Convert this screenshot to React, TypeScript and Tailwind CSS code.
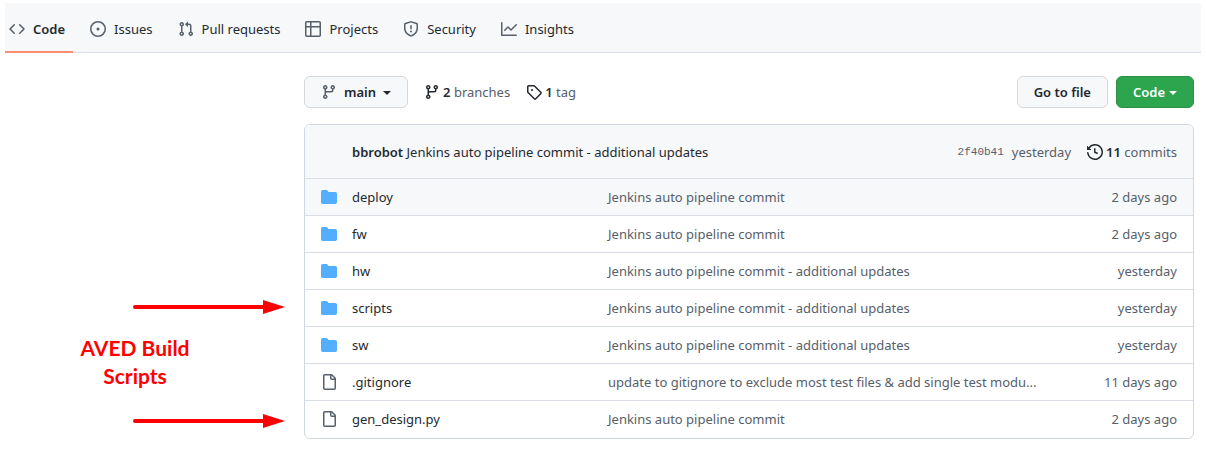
import React from "react";

const paths = {
  code: "M4.72 3.22a.75.75 0 011.06 1.06L2.06 8l3.72 3.72a.75.75 0 11-1.06 1.06L.47 8.53a.75.75 0 010-1.06l4.25-4.25zm6.56 0a.75.75 0 10-1.06 1.06L13.94 8l-3.72 3.72a.75.75 0 101.06 1.06l4.25-4.25a.75.75 0 000-1.06l-4.25-4.25z",
  issue:
    "M8 9.5a1.5 1.5 0 100-3 1.5 1.5 0 000 3zM8 0a8 8 0 100 16A8 8 0 008 0zM1.5 8a6.5 6.5 0 1113 0 6.5 6.5 0 01-13 0z",
  pull: "M7.177 3.073L9.573.677A.25.25 0 0110 .854v4.792a.25.25 0 01-.427.177L7.177 3.427a.25.25 0 010-.354zM3.75 2.5a.75.75 0 100 1.5.75.75 0 000-1.5zm-2.25.75a2.25 2.25 0 113 2.122v5.256a2.251 2.251 0 11-1.5 0V5.372A2.25 2.25 0 011.5 3.25zM11 2.5h-1V4h1a1 1 0 011 1v5.628a2.251 2.251 0 101.5 0V5A2.5 2.5 0 0011 2.5zm1 10.25a.75.75 0 111.5 0 .75.75 0 01-1.5 0zM3.75 12a.75.75 0 100 1.5.75.75 0 000-1.5z",
  table:
    "M0 1.75C0 .784.784 0 1.75 0h12.5C15.216 0 16 .784 16 1.75v12.5A1.75 1.75 0 0114.25 16H1.75A1.75 1.75 0 010 14.25V1.75zM1.5 6.5v7.75c0 .138.112.25.25.25H5v-8H1.5zM5 5H1.5V1.75a.25.25 0 01.25-.25H5V5zm1.5 1.5v8h7.75a.25.25 0 00.25-.25V6.5h-8zm8-1.5h-8V1.5h7.75a.25.25 0 01.25.25V5z",
  shield:
    "M7.467.133a1.75 1.75 0 011.066 0l5.25 1.68A1.75 1.75 0 0115 3.48V7c0 1.566-.32 3.182-1.303 4.682-.983 1.498-2.585 2.813-5.032 3.855a1.7 1.7 0 01-1.33 0c-2.447-1.042-4.049-2.357-5.032-3.855C1.32 10.182 1 8.566 1 7V3.48a1.75 1.75 0 011.217-1.667l5.25-1.68zm.61 1.429a.25.25 0 00-.153 0l-5.25 1.68a.25.25 0 00-.174.238V7c0 1.358.275 2.666 1.057 3.86.784 1.194 2.121 2.34 4.366 3.297a.2.2 0 00.154 0c2.245-.956 3.582-2.104 4.366-3.298C13.225 9.666 13.5 8.36 13.5 7V3.48a.25.25 0 00-.174-.237l-5.25-1.68zM9 10.5a1 1 0 11-2 0 1 1 0 012 0zm-.25-5.75a.75.75 0 10-1.5 0v3a.75.75 0 001.5 0v-3z",
  graph:
    "M1.5 1.75a.75.75 0 00-1.5 0v12.5c0 .414.336.75.75.75h14.5a.75.75 0 000-1.5H1.5V1.75zm14.28 2.53a.75.75 0 00-1.06-1.06L10 7.94 7.53 5.47a.75.75 0 00-1.06 0L3.22 8.72a.75.75 0 001.06 1.06L7 7.06l2.47 2.47a.75.75 0 001.06 0l5.25-5.25z",
  branch:
    "M11.75 2.5a.75.75 0 100 1.5.75.75 0 000-1.5zm-2.25.75a2.25 2.25 0 113 2.122V6A2.5 2.5 0 0110 8.5H6a1 1 0 00-1 1v1.128a2.251 2.251 0 11-1.5 0V5.372a2.25 2.25 0 111.5 0v1.836A2.492 2.492 0 016 7h4a1 1 0 001-1v-.628A2.25 2.25 0 019.5 3.25zM4.25 12a.75.75 0 100 1.5.75.75 0 000-1.5zM3.5 3.25a.75.75 0 111.5 0 .75.75 0 01-1.5 0z",
  tag: "M2.5 7.775V2.75a.25.25 0 01.25-.25h5.025a.25.25 0 01.177.073l6.25 6.25a.25.25 0 010 .354l-5.025 5.025a.25.25 0 01-.354 0l-6.25-6.25a.25.25 0 01-.073-.177zm-1.5 0V2.75C1 1.784 1.784 1 2.75 1h5.025c.464 0 .91.184 1.238.513l6.25 6.25a1.75 1.75 0 010 2.474l-5.026 5.026a1.75 1.75 0 01-2.474 0l-6.25-6.25A1.75 1.75 0 011 7.775zM6 5a1 1 0 100 2 1 1 0 000-2z",
  history:
    "M1.643 3.143L.427 1.927A.25.25 0 000 2.104V5.75c0 .138.112.25.25.25h3.646a.25.25 0 00.177-.427L2.715 4.215a6.5 6.5 0 11-1.18 4.458.75.75 0 10-1.493.154 8.001 8.001 0 101.6-5.684zM7.75 4a.75.75 0 01.75.75v2.992l2.028.812a.75.75 0 01-.557 1.392l-2.5-1A.75.75 0 017 8.25v-3.5A.75.75 0 017.75 4z",
  folder:
    "M1.75 1A1.75 1.75 0 000 2.75v10.5C0 14.216.784 15 1.75 15h12.5A1.75 1.75 0 0016 13.25v-8.5A1.75 1.75 0 0014.25 3h-6.5a.25.25 0 01-.2-.1l-.9-1.2c-.33-.44-.85-.7-1.4-.7h-3.5z",
  file: "M2 1.75C2 .784 2.784 0 3.75 0h6.586c.464 0 .909.184 1.237.513l2.914 2.914c.329.328.513.773.513 1.237v9.586A1.75 1.75 0 0 1 13.25 16h-9.5A1.75 1.75 0 0 1 2 14.25Zm1.75-.25a.25.25 0 0 0-.25.25v12.5c0 .138.112.25.25.25h9.5a.25.25 0 0 0 .25-.25V6h-2.75A1.75 1.75 0 0 1 9 4.25V1.5Zm6.75.062V4.25c0 .138.112.25.25.25h2.688l-.011-.013-2.914-2.914-.013-.011Z",
};

type IconName = keyof typeof paths;

function Icon({ name, className = "" }: { name: IconName; className?: string }) {
  return (
    <svg viewBox="0 0 16 16" aria-hidden="true" className={`size-4 shrink-0 fill-current ${className}`}>
      <path fillRule="evenodd" d={paths[name]} />
    </svg>
  );
}

function Caret() {
  return (
    <svg viewBox="0 0 8 4" aria-hidden="true" className="mt-0.5 h-1 w-2 shrink-0 fill-current">
      <path d="M0 0h8L4 4z" />
    </svg>
  );
}

function Arrow() {
  return (
    <svg viewBox="0 0 152 16" aria-hidden="true" className="h-4 w-[152px] shrink-0">
      <path d="M2 8h130" stroke="#ff0000" strokeWidth="4" strokeLinecap="round" />
      <path d="M130 1l22 7-22 7z" fill="#ff0000" />
    </svg>
  );
}

const tabs: { label: string; icon: IconName }[] = [
  { label: "Code", icon: "code" },
  { label: "Issues", icon: "issue" },
  { label: "Pull requests", icon: "pull" },
  { label: "Projects", icon: "table" },
  { label: "Security", icon: "shield" },
  { label: "Insights", icon: "graph" },
];

const files: { name: string; dir: boolean; message: string; age: string }[] = [
  { name: "deploy", dir: true, message: "Jenkins auto pipeline commit", age: "2 days ago" },
  { name: "fw", dir: true, message: "Jenkins auto pipeline commit", age: "2 days ago" },
  { name: "hw", dir: true, message: "Jenkins auto pipeline commit - additional updates", age: "yesterday" },
  { name: "scripts", dir: true, message: "Jenkins auto pipeline commit - additional updates", age: "yesterday" },
  { name: "sw", dir: true, message: "Jenkins auto pipeline commit - additional updates", age: "yesterday" },
  {
    name: ".gitignore",
    dir: false,
    message: "update to gitignore to exclude most test files & add single test modu...",
    age: "11 days ago",
  },
  { name: "gen_design.py", dir: false, message: "Jenkins auto pipeline commit", age: "2 days ago" },
];

export default function App() {
  return (
    <div className="bg-white pt-[3px] font-['Noto_Sans','Open_Sans',sans-serif] text-[13px] leading-5 text-[#24292f]">
      <nav className="mx-[5px] flex gap-[17px] border-b border-[#d8dee4] bg-[#f6f8fa]">
        {tabs.map((tab, i) => (
          <a
            key={tab.label}
            href="#"
            aria-current={i === 0 ? "page" : undefined}
            className={
              i === 0
                ? "-mb-px flex items-center gap-2 border-b-2 border-[#fd8c73] pt-4 pr-2 pb-3 pl-1 font-semibold"
                : "flex items-center gap-2 pt-[15px] pr-2 pb-3"
            }
          >
            <Icon name={tab.icon} className="text-[#57606a]" />
            {tab.label}
          </a>
        ))}
      </nav>

      <div className="flex pt-[23px]">
        <aside className="flex w-[304px] shrink-0 flex-col items-end pt-[223px] pr-[19px]">
          <Arrow />
          <p className="w-full pt-[19px] pr-[15px] pb-[23px] text-center font-['Lato',sans-serif] text-[21px] leading-7 font-bold text-[#ff0000]">
            AVED Build
            <br />
            Scripts
          </p>
          <Arrow />
        </aside>

        <main className="min-w-0 flex-1 pr-3">
          <div className="flex items-center">
            <button
              type="button"
              className="flex h-8 items-center gap-[7px] rounded-md border border-[#d5d8da] bg-[#f6f8fa] px-4 font-semibold"
            >
              <Icon name="branch" className="text-[#57606a]" />
              main
              <Caret />
            </button>
            <a href="#" className="ml-4 flex items-center gap-[3px]">
              <Icon name="branch" />
              <span className="text-[#57606a]">
                <strong className="font-semibold text-[#24292f]">2</strong> branches
              </span>
            </a>
            <a href="#" className="ml-4 flex items-center gap-[3px]">
              <Icon name="tag" />
              <span className="text-[#57606a]">
                <strong className="font-semibold text-[#24292f]">1</strong> tag
              </span>
            </a>
            <button
              type="button"
              className="ml-auto h-8 rounded-md border border-[#d5d8da] bg-[#f6f8fa] px-4 font-semibold"
            >
              Go to file
            </button>
            <button
              type="button"
              className="ml-2 flex h-8 items-center gap-1 rounded-md border border-[#2a9147] bg-[#2da44e] px-4 font-semibold text-white"
            >
              Code
              <Caret />
            </button>
          </div>

          <section className="mt-4 overflow-hidden rounded-md border border-[#d0d7de]">
            <header className="flex items-center bg-[#f6f8fa] pt-[17px] pr-4 pb-4 pl-[47px]">
              <p className="min-w-0 flex-1 truncate">
                <strong className="font-semibold">bbrobot</strong> Jenkins auto pipeline commit - additional updates
              </p>
              <a href="#" className="font-['Liberation_Mono',monospace] text-[11px] text-[#57606a]">
                2f40b41
              </a>
              <span className="ml-2 text-[#57606a]">yesterday</span>
              <a href="#" className="ml-4 flex items-center gap-[3px]">
                <Icon name="history" />
                <span className="text-[#57606a]">
                  <strong className="font-semibold text-[#24292f]">11</strong> commits
                </span>
              </a>
            </header>
            <table className="w-full table-fixed">
              <tbody>
                {files.map((file, i) => (
                  <tr key={file.name} className={i === 0 ? "bg-[#f6f8fa]" : ""}>
                    <td className="h-[37px] w-[299px] border-t border-[#d8dee4] py-0 pl-4">
                      <a href="#" className="flex items-center gap-[15px]">
                        <Icon
                          name={file.dir ? "folder" : "file"}
                          className={file.dir ? "text-[#54aeff]" : "text-[#57606a]"}
                        />
                        {file.name}
                      </a>
                    </td>
                    <td className="truncate border-t border-[#d8dee4] py-0 pl-1 text-[#57606a]">{file.message}</td>
                    <td className="w-[134px] border-t border-[#d8dee4] py-0 pr-4 text-right text-[#57606a]">
                      {file.age}
                    </td>
                  </tr>
                ))}
              </tbody>
            </table>
          </section>
        </main>
      </div>
    </div>
  );
}
